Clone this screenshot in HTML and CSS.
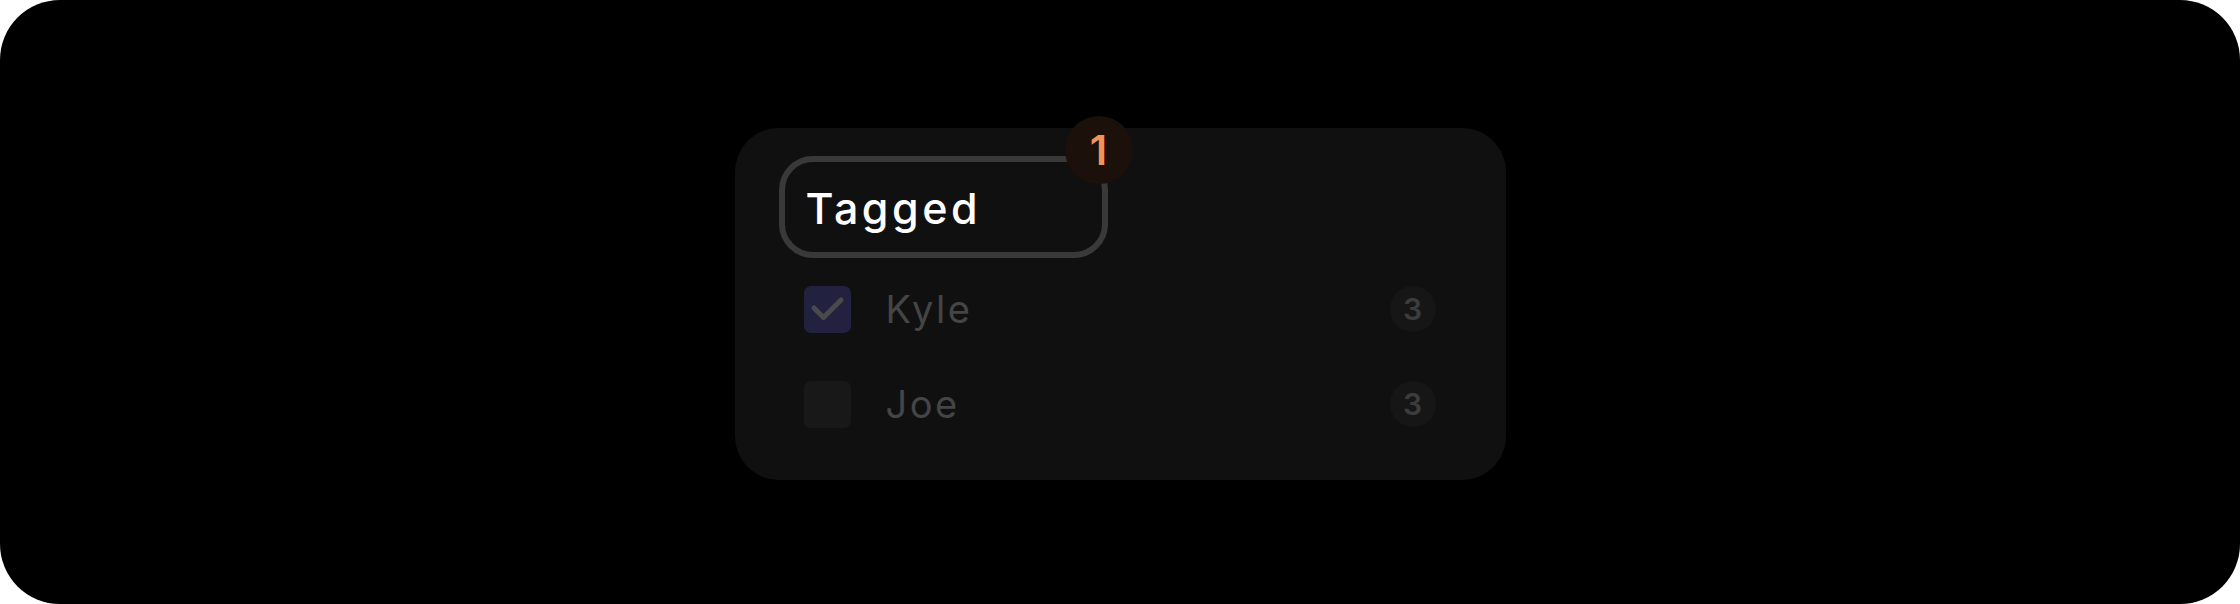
FILE: index.html
```html
<!DOCTYPE html>
<html lang="en">
<head>
<meta charset="utf-8">
<title>Tagged</title>
<link rel="stylesheet" href="styles.css">
</head>
<body>
<div class="screen">
  <div class="card">
    <div class="tag-wrap">
      <div class="tag"><span class="tag-label">Tagged</span></div>
      <span class="badge">1</span>
    </div>
    <ul class="list">
      <li class="row">
        <span class="check checked">
          <svg class="tick" viewBox="0 0 47 47" width="47" height="47"><path d="M10 22 L19.5 31.5 L37 14" fill="none" stroke="#4a4a4a" stroke-width="5" stroke-linecap="round" stroke-linejoin="round"/></svg>
        </span>
        <span class="name">Kyle</span>
        <span class="count">3</span>
      </li>
      <li class="row">
        <span class="check"></span>
        <span class="name">Joe</span>
        <span class="count">3</span>
      </li>
    </ul>
  </div>
</div>
</body>
</html>
```

FILE: styles.css
```css
html, body {
  margin: 0;
  padding: 0;
  background: #ffffff;
}

body {
  font-family: "Inter", "Liberation Sans", sans-serif;
}

.screen {
  width: 2240px;
  height: 604px;
  box-sizing: border-box;
  padding-top: 3px;
  background: #000000;
  border-radius: 60px;
  display: flex;
  align-items: center;
  justify-content: center;
}

.card {
  width: 771px;
  box-sizing: border-box;
  padding: 28px 44px 28px;
  background: #101010;
  border-radius: 44px;
}

.tag-wrap {
  position: relative;
  width: 329px;
}

.tag {
  box-sizing: border-box;
  height: 102px;
  border: 6px solid #393939;
  border-radius: 34px;
  display: flex;
  align-items: center;
  padding: 3px 0 0 21px;
}

.tag-label {
  font-size: 43px;
  font-weight: 500;
  color: #ffffff;
  letter-spacing: 3.5px;
}

.badge {
  position: absolute;
  left: 286px;
  top: -40px;
  width: 68px;
  height: 68px;
  border-radius: 50%;
  background: #1b100a;
  color: #f2935a;
  font-size: 41px;
  font-weight: 600;
  display: flex;
  align-items: center;
  justify-content: center;
}

.list {
  margin: 4px 0 0;
  padding: 0;
  list-style: none;
}

.row {
  height: 95px;
  display: flex;
  align-items: center;
  padding: 0 26px 0 25px;
}

.check {
  width: 47px;
  height: 47px;
  border-radius: 7px;
  background: #181818;
  flex: none;
  display: block;
}

.check.checked {
  background: #22213f;
}

.tick {
  display: block;
}

.name {
  margin-left: 35px;
  font-size: 38px;
  color: #454545;
  letter-spacing: 2.5px;
  flex: 1;
}

.count {
  width: 46px;
  height: 46px;
  border-radius: 50%;
  background: #161616;
  color: #3c3c3c;
  font-size: 30px;
  font-weight: 600;
  display: flex;
  align-items: center;
  justify-content: center;
}
```
